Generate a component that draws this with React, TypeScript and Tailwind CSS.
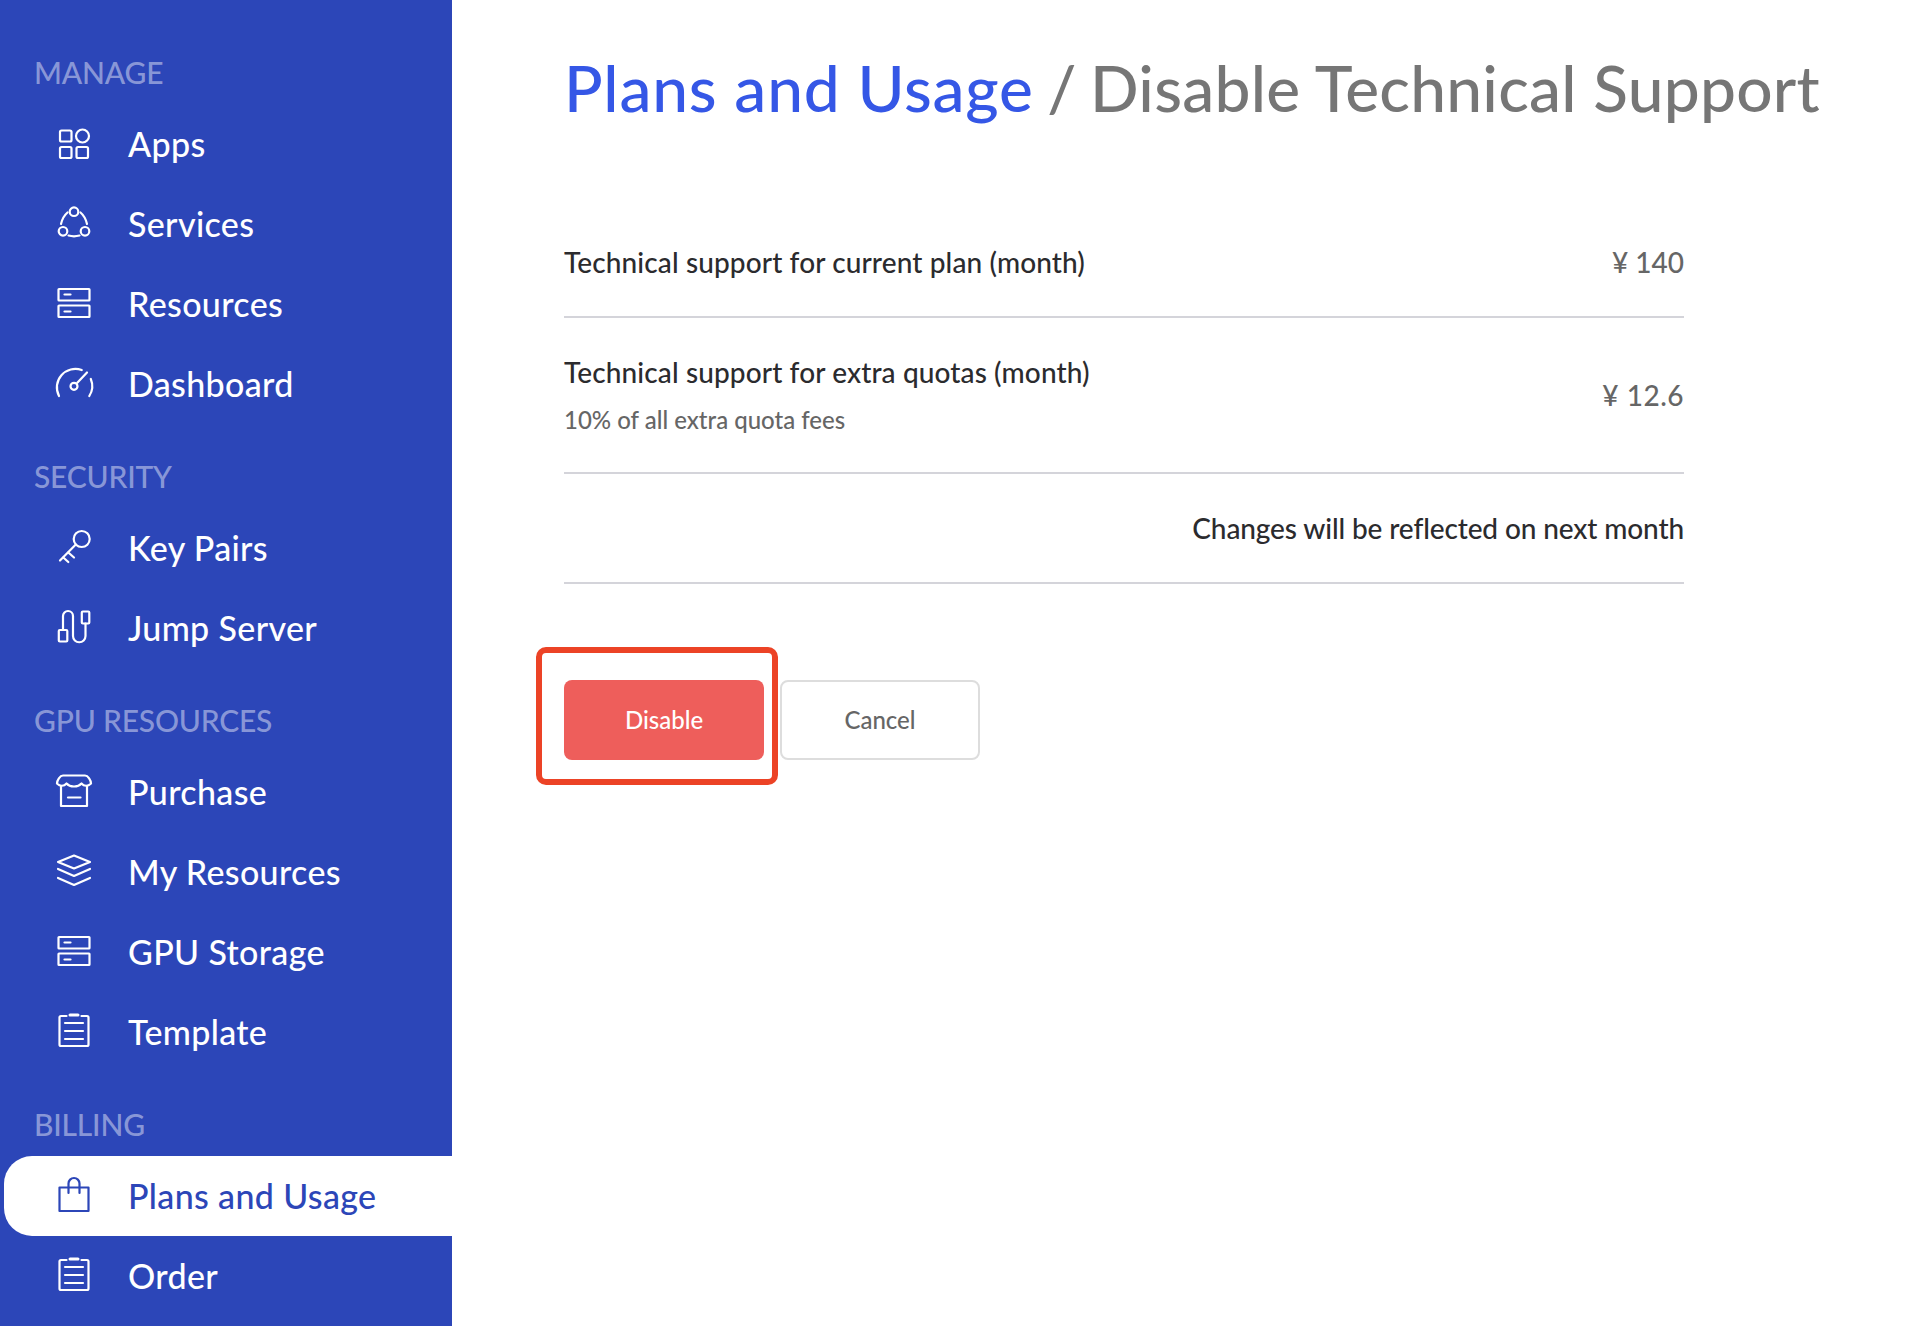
const navFont = "font-['Lato','Noto_Sans',sans-serif]";

function Icon({ children }: { children: React.ReactNode }) {
  return (
    <svg
      width="36"
      height="36"
      viewBox="0 0 36 36"
      fill="none"
      stroke="currentColor"
      strokeWidth="2.2"
      strokeLinecap="round"
      strokeLinejoin="round"
      className="shrink-0 overflow-visible"
    >
      {children}
    </svg>
  );
}

const AppsIcon = () => (
  <Icon>
    <rect x="4" y="4.5" width="11.5" height="11" rx="1.5" />
    <circle cx="26.5" cy="10" r="6.5" />
    <rect x="4" y="21" width="11.5" height="11" rx="1.5" />
    <rect x="20.5" y="21" width="11.5" height="11" rx="1.5" />
  </Icon>
);

const ServicesIcon = () => (
  <Icon>
    <circle cx="18" cy="5.700" r="4.300" />
    <circle cx="7" cy="25.300" r="4.300" />
    <circle cx="29" cy="25.300" r="4.300" />
    <path d="M5 18C6 13.500 8 9.500 11.500 6.500" />
    <path d="M24.500 6.500C28 9.500 30 13.500 31 18" />
    <path d="M12.500 29.500C16 30.500 20 30.500 23.500 29.500" />
  </Icon>
);

const ServerIcon = () => (
  <Icon>
    <rect x="2.500" y="3" width="31" height="11.500" rx="0.500" />
    <rect x="2.500" y="19.500" width="31" height="11.500" rx="0.500" />
    <path d="M8.500 8.500H14.500" />
    <path d="M8.500 25.500H14.500" />
  </Icon>
);

const GaugeIcon = () => (
  <Icon>
    <circle cx="18" cy="20.300" r="3.500" />
    <path d="M21.300 16.800L31 6.500" />
    <path d="M3 30A18.500 18.500 0 0 1 25.700 4" />
    <path d="M34.800 13A18.500 18.500 0 0 1 33.300 30" />
  </Icon>
);

const KeyIcon = () => (
  <Icon>
    <circle cx="25.700" cy="9" r="8" />
    <path d="M19.800 14.500L4 30.500" />
    <path d="M12.300 22.500L18 27.500" />
    <path d="M7.300 27.500L12.300 32" />
  </Icon>
);

const JumpIcon = () => (
  <Icon>
    <rect x="2.800" y="20" width="8.500" height="11.500" rx="1" />
    <rect x="25.800" y="1.500" width="7.500" height="12" rx="1" />
    <path d="M7 20V6a5 5 0 0 1 10 0V26a6.250 6.250 0 0 0 12.500 0V13.500" />
  </Icon>
);

const StoreIcon = () => (
  <Icon>
    <path d="M7 1.500H29C32 1.500 35 6.500 35 9.500C32 12.500 28 12.500 25.500 9.500C22 13.500 14 13.500 10.500 9.500C8 12.500 4 12.500 1 9.500C1 6.500 4 1.500 7 1.500Z" />
    <path d="M5 12V32H31V12" />
    <path d="M12 23.500H24.500" />
  </Icon>
);

const LayersIcon = () => (
  <Icon>
    <path d="M18 1.500L34 8L18 14.500L2 8Z" />
    <path d="M2 15L18 22L34 15" />
    <path d="M2 24L18 31L34 24" />
  </Icon>
);

const ClipboardIcon = () => (
  <Icon>
    <path d="M10.500 2H5A1.500 1.500 0 0 0 3.500 3.500V30.500A1.500 1.500 0 0 0 5 32H31A1.500 1.500 0 0 0 32.500 30.500V3.500A1.500 1.500 0 0 0 31 2H25.500" />
    <path d="M14 1H22" strokeWidth="3" />
    <path d="M9 9H27" />
    <path d="M9 17H27" />
    <path d="M9 25H27" />
  </Icon>
);

const BagIcon = () => (
  <Icon>
    <path d="M3.500 9.500H32.500V33H3.500Z" />
    <path d="M12.500 15V5.500a5.500 5.500 0 0 1 11 0V15" />
  </Icon>
);

const sections = [
  {
    title: "MANAGE",
    items: [
      { label: "Apps", icon: <AppsIcon /> },
      { label: "Services", icon: <ServicesIcon /> },
      { label: "Resources", icon: <ServerIcon /> },
      { label: "Dashboard", icon: <GaugeIcon /> },
    ],
  },
  {
    title: "SECURITY",
    items: [
      { label: "Key Pairs", icon: <KeyIcon /> },
      { label: "Jump Server", icon: <JumpIcon /> },
    ],
  },
  {
    title: "GPU RESOURCES",
    items: [
      { label: "Purchase", icon: <StoreIcon /> },
      { label: "My Resources", icon: <LayersIcon /> },
      { label: "GPU Storage", icon: <ServerIcon /> },
      { label: "Template", icon: <ClipboardIcon /> },
    ],
  },
  {
    title: "BILLING",
    items: [
      { label: "Plans and Usage", icon: <BagIcon />, active: true },
      { label: "Order", icon: <ClipboardIcon /> },
    ],
  },
];

function Sidebar() {
  return (
    <aside className="h-screen w-[452px] shrink-0 overflow-hidden bg-[#2c46b8] pt-5 pl-1">
      {sections.map((section) => (
        <div key={section.title}>
          <div className="pl-[30px] pt-8 pb-3 text-[30px] font-medium leading-10 tracking-[-0.2px] text-white/45">
            {section.title}
          </div>
          {section.items.map((item) =>
            item.active ? (
              <div
                key={item.label}
                className="flex h-20 items-center gap-9 rounded-l-[28px] bg-white pl-[52px] text-[34px] font-medium tracking-[0.35px] text-[#2c46b8]"
              >
                {item.icon}
                <span className="pb-[2px]">{item.label}</span>
              </div>
            ) : (
              <div
                key={item.label}
                className="flex h-20 items-center gap-9 pl-[52px] text-[34px] font-medium tracking-[0.35px] text-white"
              >
                {item.icon}
                <span className="pb-[2px]">{item.label}</span>
              </div>
            )
          )}
        </div>
      ))}
    </aside>
  );
}

export default function App() {
  return (
    <div className={`flex h-screen overflow-hidden bg-white ${navFont}`}>
      <Sidebar />
      <main className="flex-1 pl-[112px] pt-[52px]">
        <h1 className="whitespace-nowrap text-[64px] font-medium leading-[72px] tracking-[0.25px] text-[#767676]">
          <span className="tracking-[0.8px] text-[#3557e6]">Plans and Usage</span>{" "}
          <span className="-ml-[3px]">/</span>{" "}
          <span className="-ml-[3px]">Disable Technical Support</span>
        </h1>

        <div className="mt-[85px] w-[1120px]">
          <div className="flex h-[109px] items-center justify-between border-b-2 border-[#d4d4da] pb-[2px] text-[28px]">
            <span className="font-medium tracking-[0.12px] text-[#2b2b2e]">Technical support for current plan (month)</span>
            <span className="font-medium text-[#666666]">¥ 140</span>
          </div>
          <div className="flex h-[156px] items-center justify-between border-b-2 border-[#d4d4da]">
            <div className="flex flex-col gap-[14px] pt-[1px]">
              <span className="text-[28px] font-medium leading-[34px] tracking-[0.12px] text-[#2b2b2e]">Technical support for extra quotas (month)</span>
              <span className="text-[24px] font-medium leading-[34px] text-[#666666]">10% of all extra quota fees</span>
            </div>
            <span className="text-[28px] font-medium tracking-[0.5px] text-[#666666]">¥ 12.6</span>
          </div>
          <div className="flex h-[110px] items-center justify-end border-b-2 border-[#d4d4da] text-[28px] font-medium tracking-[-0.12px] text-[#2b2b2e]">
            Changes will be reflected on next month
          </div>
        </div>

        <div className="mt-24 flex gap-4">
          <div className="relative">
            <button className="h-20 w-[200px] rounded-lg bg-[#ee5e5b] text-2xl font-medium text-white">Disable</button>
            {/* red callout round the button */}
            <div className="pointer-events-none absolute -left-[28px] -top-[33px] h-[138px] w-[242px] rounded-[10px] border-[6px] border-[#ec4326]" />
          </div>
          <button className="h-20 w-[200px] rounded-lg border-2 border-[#dddddd] bg-white text-2xl font-medium text-[#666666]">Cancel</button>
        </div>
      </main>
    </div>
  );
}
